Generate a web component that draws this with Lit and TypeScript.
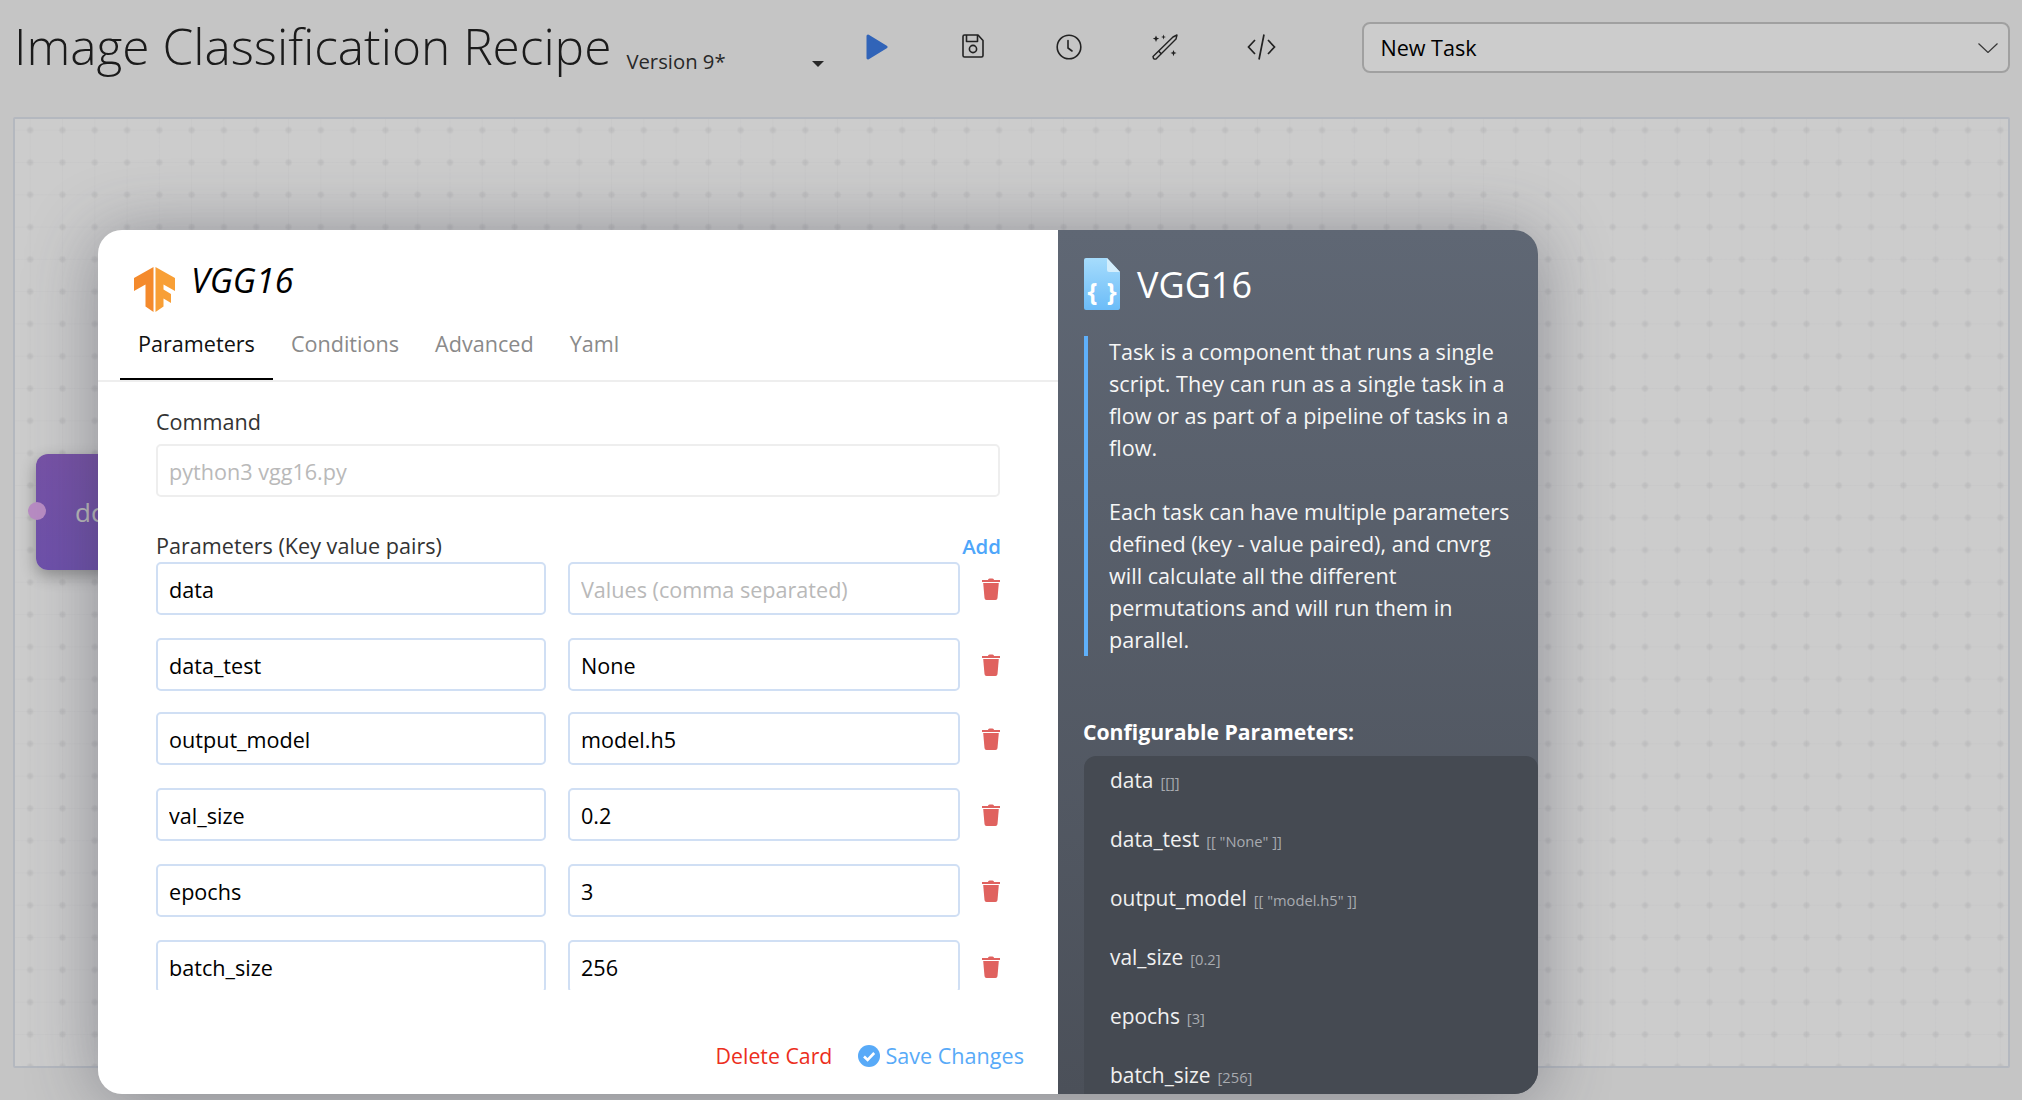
import { LitElement, css, html, svg } from 'lit'
import { customElement } from 'lit/decorators.js'

const rows = [
  { key: 'data', value: '' },
  { key: 'data_test', value: 'None' },
  { key: 'output_model', value: 'model.h5' },
  { key: 'val_size', value: '0.2' },
  { key: 'epochs', value: '3' },
  { key: 'batch_size', value: '256' },
]

const configurable = [
  { name: 'data', tag: '[[]]' },
  { name: 'data_test', tag: '[[ "None" ]]' },
  { name: 'output_model', tag: '[[ "model.h5" ]]' },
  { name: 'val_size', tag: '[0.2]' },
  { name: 'epochs', tag: '[3]' },
  { name: 'batch_size', tag: '[256]' },
]

const playIcon = svg`<svg width="22" height="26" viewBox="0 0 22 26"><path d="M2 2 L20 13 L2 24 Z" fill="#3e7de6" stroke="#3e7de6" stroke-width="3" stroke-linejoin="round"/></svg>`

const saveIcon = svg`<svg width="22" height="24" viewBox="0 0 22 24" fill="none" stroke="#2b2b2b" stroke-width="1.6" stroke-linejoin="round"><path d="M2.5 1 H16 L21 6.5 V21.5 A1.5 1.5 0 0 1 19.5 23 H2.5 A1.5 1.5 0 0 1 1 21.5 V2.5 A1.5 1.5 0 0 1 2.5 1 Z"/><path d="M4.5 1 V7.5 H15.5 V1"/><circle cx="11" cy="15" r="3.6"/></svg>`

const clockIcon = svg`<svg width="26" height="26" viewBox="0 0 26 26" fill="none" stroke="#2b2b2b" stroke-width="1.6" stroke-linecap="round"><circle cx="13" cy="13" r="11.8"/><path d="M12 6.5 V14 L16 17"/></svg>`

const wandIcon = svg`<svg width="26" height="26" viewBox="0 0 26 26" fill="none" stroke="#2b2b2b" stroke-width="1.4" stroke-linejoin="round"><path d="M1 22.5 L21 3 L25 1 L24 5 L4 25 Q2.5 25.5 1.5 24.5 Z"/><path d="M6.5 17 L9.5 20" stroke-width="1.6"/><path d="M4 1.5 L5 3.8 L7.2 4.6 L5 5.5 L4 8 L3 5.5 L.8 4.6 L3 3.8 Z M11.5 .5 L12.2 2.4 L14 3 L12.2 3.6 L11.5 5.5 L10.8 3.6 L9 3 L10.8 2.4 Z M21.5 16 L22.4 18.3 L24.6 19 L22.4 19.8 L21.5 22.2 L20.6 19.8 L18.4 19 L20.6 18.3 Z" fill="#2b2b2b" stroke="none"/></svg>`

const codeIcon = svg`<svg width="29" height="26" viewBox="0 0 29 26" fill="none" stroke="#2b2b2b" stroke-width="1.7"><path d="M8 6 L1.5 13 L8 20"/><path d="M21 6 L27.5 13 L21 20"/><path d="M17 .5 L12 25.5"/></svg>`

const tfLogo = svg`<svg width="41" height="45" viewBox="0 0 41 45"><path d="M19.5 0 L0 11 V24 L11.5 17.5 V39.5 L19.5 45 Z" fill="#f48a2c"/><path d="M21.5 0 L41 11 V24 L29.5 17.5 V22.5 L37 27 V36 L29.5 31.5 V39.5 L21.5 45 Z" fill="#f89f36"/></svg>`

const docIcon = svg`<svg width="36" height="52" viewBox="0 0 36 52"><defs><linearGradient id="doc" x1="0" x2="0" y1="0" y2="1"><stop offset="0" stop-color="#a6dcfc"/><stop offset="1" stop-color="#6bbcf8"/></linearGradient></defs><path d="M2 0 H23 L36 14 V50 A2 2 0 0 1 34 52 H2 A2 2 0 0 1 0 50 V2 A2 2 0 0 1 2 0 Z" fill="url(#doc)"/><path d="M23 0 L36 14 H25 A2 2 0 0 1 23 12 Z" fill="#d4eefc"/><text x="18" y="43" text-anchor="middle" fill="#fff" font-size="25" font-weight="700" word-spacing="3" font-family="'Open Sans', sans-serif">{ }</text></svg>`

const trashIcon = svg`<svg width="18" height="22" viewBox="0 0 18 22"><path d="M6 2 Q6 .5 7.5 .5 H10.5 Q12 .5 12 2 H18 V4 H0 V2 Z" fill="#e0625f"/><path d="M1.2 5 H16.8 L15.5 20 Q15.3 22 13.5 22 H4.5 Q2.7 22 2.5 20 Z" fill="#e0625f"/></svg>`

const checkIcon = svg`<svg width="22" height="22" viewBox="0 0 22 22"><circle cx="11" cy="11" r="11" fill="#58aaf8"/><path d="M6 11.5 L9.6 15 L16.2 8" fill="none" stroke="#fff" stroke-width="2.6"/></svg>`

const chevronIcon = svg`<svg width="20" height="10" viewBox="0 0 20 10" fill="none" stroke="#444" stroke-width="1.2"><path d="M.5 .5 L10 9.5 L19.5 .5"/></svg>`

@customElement('app-root')
export class AppRoot extends LitElement {
  render() {
    return html`
      <div class="page">
        <header class="header">
          <h1 class="title">Image Classification Recipe</h1>
          <div class="version"><span>Version 9*</span><i class="caret"></i></div>
          <div class="toolbar">
            <span class="slot">${playIcon}</span>
            <span class="slot">${saveIcon}</span>
            <span class="slot">${clockIcon}</span>
            <span class="slot">${wandIcon}</span>
            <span class="slot">${codeIcon}</span>
          </div>
          <div class="select"><span>New Task</span>${chevronIcon}</div>
        </header>

        <div class="canvas">
          <div class="node"><i class="port"></i><span>dc</span></div>
        </div>

        <div class="overlay"></div>

        <section class="modal">
          <div class="left">
            <div class="card-head">${tfLogo}<span class="card-title">VGG16</span></div>
            <nav class="tabs">
              <span class="tab active">Parameters</span>
              <span class="tab">Conditions</span>
              <span class="tab">Advanced</span>
              <span class="tab">Yaml</span>
            </nav>
            <div class="form">
              <label class="label">Command</label>
              <input class="command" placeholder="python3 vgg16.py" />
              <div class="params-head">
                <span>Parameters (Key value pairs)</span>
                <a class="add">Add</a>
              </div>
              <div class="rows">
                ${rows.map(
                  (r) => html`
                    <div class="row">
                      <input .value=${r.key} />
                      <input .value=${r.value} placeholder="Values (comma separated)" />
                      ${trashIcon}
                    </div>
                  `
                )}
              </div>
            </div>
            <div class="footer">
              <a class="delete">Delete Card</a>
              <a class="save">${checkIcon}<span>Save Changes</span></a>
            </div>
          </div>

          <aside class="right">
            <div class="doc-head">${docIcon}<span>VGG16</span></div>
            <p class="quote">
              Task is a component that runs a single script. They can run as a single task in a flow or as part of a pipeline of tasks in a flow.<br /><br />Each task can have multiple parameters defined (key - value paired), and cnvrg will calculate all the different permutations and will run them in parallel.
            </p>
            <h3 class="conf-title">Configurable Parameters:</h3>
            <ul class="conf-list">
              ${configurable.map((c) => html`<li><span>${c.name}</span><small>${c.tag}</small></li>`)}
            </ul>
          </aside>
        </section>
      </div>
    `
  }

  static styles = css`
    :host {
      display: block;
      font-family: 'Open Sans', 'DejaVu Sans', sans-serif;
    }

    * {
      box-sizing: border-box;
    }

    .page {
      position: relative;
      height: 1100px;
      overflow: hidden;
      background: #f7f7f7;
    }

    .header {
      display: flex;
      align-items: flex-start;
      height: 117px;
      padding-left: 14px;
    }

    .title {
      margin: 14px 0 0;
      font-size: 49.6px;
      font-weight: 300;
      line-height: 64px;
      color: #222;
      white-space: nowrap;
    }

    .version {
      display: flex;
      align-items: center;
      justify-content: space-between;
      width: 198px;
      margin: 47px 0 0 15px;
      font-size: 20.3px;
      line-height: 28px;
      color: #333;
    }

    .caret {
      width: 0;
      height: 0;
      margin-top: 5px;
      border: 6px solid transparent;
      border-top: 6px solid #333;
      border-bottom: 0;
    }

    .toolbar {
      display: flex;
      margin: 34px 0 0 5px;
    }

    .slot {
      display: flex;
      justify-content: center;
      width: 96px;
      height: 26px;
    }

    .select {
      display: flex;
      align-items: center;
      justify-content: space-between;
      flex: 1;
      height: 51px;
      margin: 22px 12px 0 53px;
      padding: 0 10px 0 16px;
      border: 2px solid #c9c9c9;
      border-radius: 8px;
      background: #fff;
      font-size: 21.6px;
      color: #000;
    }

    .canvas {
      position: relative;
      height: 951px;
      margin: 0 12px 0 13px;
      border: 2px solid #e2e6ef;
      border-radius: 2px;
      background-color: #fff;
      background-image: radial-gradient(circle, rgba(60, 60, 70, 0.07) 2px, transparent 4px),
        linear-gradient(90deg, transparent 15.6px, rgba(60, 60, 70, 0.015) 15.6px, rgba(60, 60, 70, 0.015) 17px, transparent 17px),
        linear-gradient(transparent 15.6px, rgba(60, 60, 70, 0.015) 15.6px, rgba(60, 60, 70, 0.015) 17px, transparent 17px);
      background-size: 32.3px 32.3px;
      background-position: -1px -5px;
    }

    .node {
      position: absolute;
      left: 21px;
      top: 335px;
      display: flex;
      align-items: center;
      width: 240px;
      height: 116px;
      padding-left: 39px;
      border-radius: 12px;
      background: linear-gradient(180deg, #9567d0, #8a66d6);
      box-shadow: 0 6px 16px rgba(0, 0, 0, 0.3);
      font-size: 26px;
      color: #ececec;
    }

    .port {
      position: absolute;
      left: -8px;
      top: 48px;
      width: 18px;
      height: 18px;
      border-radius: 50%;
      background: #e6aff4;
    }

    .overlay {
      position: absolute;
      inset: 0;
      background: rgba(0, 0, 0, 0.2);
    }

    .modal {
      position: absolute;
      left: 98px;
      top: 230px;
      display: grid;
      grid-template-columns: 960px 480px;
      width: 1440px;
      height: 864px;
      border-radius: 24px;
      overflow: hidden;
      box-shadow: 0 6px 70px rgba(50, 52, 70, 0.42);
    }

    .left {
      display: flex;
      flex-direction: column;
      background: #fff;
    }

    .card-head {
      display: flex;
      align-items: flex-start;
      height: 82px;
      padding: 37px 0 0 36px;
    }

    .card-title {
      margin: -9px 0 0 16px;
      font-size: 34px;
      font-style: italic;
      line-height: 44px;
      color: #000;
    }

    .tabs {
      display: flex;
      height: 70px;
      padding-left: 22px;
      border-bottom: 2px solid #eeeeee;
    }

    .tab {
      height: 68px;
      padding: 14px 18px 0;
      font-size: 21.6px;
      line-height: 36px;
      color: #8a8a8a;
    }

    .tab.active {
      border-bottom: 2px solid #000;
      color: #111;
    }

    .form {
      height: 608px;
      padding: 26px 58px 0;
      overflow: hidden;
      font-size: 21.6px;
      color: #333;
    }

    .label {
      display: block;
      margin-bottom: 8px;
      line-height: 28px;
    }

    input {
      display: block;
      width: 100%;
      height: 53px;
      padding: 2px 11px 0;
      border: 2px solid #d0dff4;
      border-radius: 5px;
      outline: none;
      background: #fff;
      font-family: inherit;
      font-size: 21.6px;
      color: #000;
    }

    input::placeholder {
      color: #b9b9b9;
      opacity: 1;
    }

    input.command {
      border-color: #eeeeee;
    }

    .params-head {
      display: flex;
      justify-content: space-between;
      margin: 35px 0 2px;
      line-height: 28px;
    }

    .add {
      margin-right: -1px;
      font-size: 20.4px;
      font-weight: 600;
      color: #4ea6fa;
    }

    .row {
      display: grid;
      grid-template-columns: 390px 392px 18px;
      column-gap: 22px;
      align-items: center;
      margin-bottom: 23px;
    }

    .row:nth-child(2) {
      margin-bottom: 21px;
    }

    .footer {
      display: flex;
      align-items: flex-start;
      justify-content: flex-end;
      gap: 26px;
      padding: 52px 34px 0 0;
      font-size: 21.6px;
      line-height: 28px;
    }

    .delete {
      font-size: 21.3px;
      color: #ec2e20;
    }

    .save {
      display: flex;
      align-items: center;
      gap: 5px;
      color: #58aaf8;
    }

    .right {
      padding: 28px 0 0 26px;
      overflow: hidden;
      background: linear-gradient(180deg, #5f6774, #4b5059);
      color: #fff;
    }

    .doc-head {
      display: flex;
      align-items: center;
      gap: 17px;
      font-size: 36px;
    }

    .quote {
      width: 437px;
      margin: 26px 0 0;
      padding-left: 21px;
      border-left: 4px solid #5fb0fa;
      font-size: 21.6px;
      line-height: 32px;
      color: #f6f6f6;
    }

    .conf-title {
      margin: 62px 0 10px -1px;
      font-size: 21.2px;
      font-weight: 700;
      line-height: 28px;
    }

    .conf-list {
      margin: 0;
      height: 338px;
      padding: 10px 0 0 26px;
      list-style: none;
      border-radius: 12px 12px 0 0;
      background: #454a52;
    }

    .conf-list li {
      display: flex;
      align-items: baseline;
      gap: 7px;
      height: 28px;
      margin-bottom: 31px;
      font-size: 20.9px;
      line-height: 28px;
      color: #f0f0f0;
    }

    .conf-list small {
      font-size: 14.7px;
      line-height: 1;
      color: #a8abb0;
    }
  `
}
